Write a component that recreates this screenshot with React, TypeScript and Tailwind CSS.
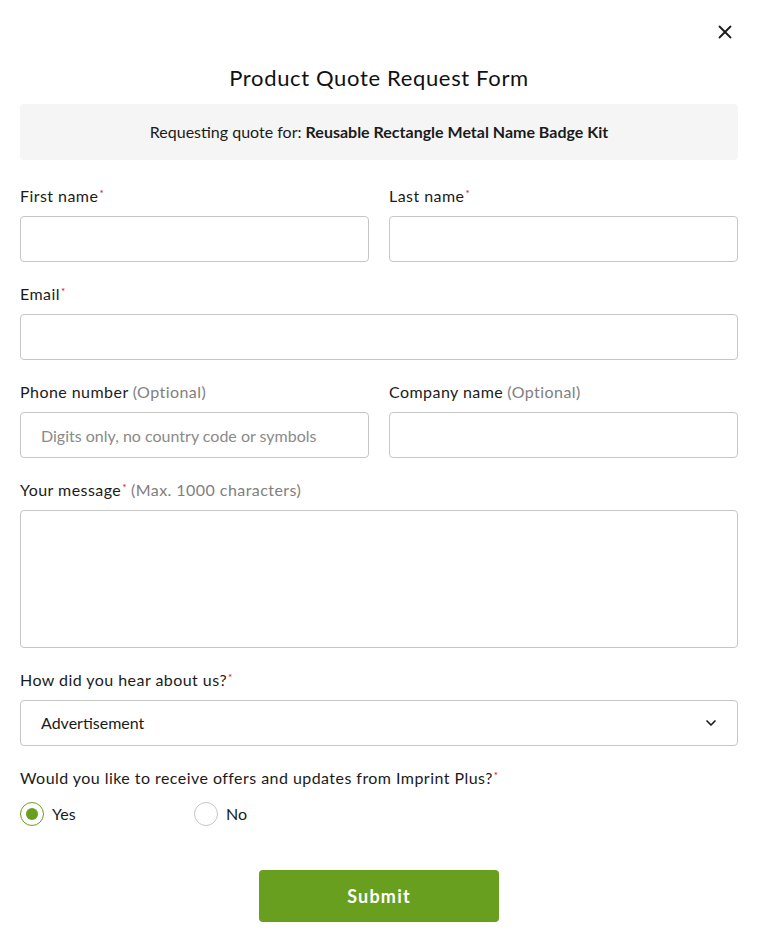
import { ChevronDown, X } from "lucide-react";

const font = { fontFamily: "Lato, 'Open Sans', sans-serif" };

function Label({
  text,
  required,
  note,
}: {
  text: string;
  required?: boolean;
  note?: string;
}) {
  return (
    <label className="mb-[10px] block text-[16px] leading-[20px] tracking-[0.45px] text-[#1b1b1b]">
      {text}
      {required && (
        <sup className="ml-[1px] text-[10px] text-[#d0021b]">*</sup>
      )}
      {note && <span className="ml-1 text-[#808080]">{note}</span>}
    </label>
  );
}

const inputCls =
  "h-[46px] w-full rounded-[4px] border border-[#c6c6c6] bg-white px-[20px] text-[16px] outline-none placeholder:text-[#8a8a8a]";

export default function App() {
  return (
    <main
      className="min-h-screen bg-white px-[20px] pb-[20px] text-[#1b1b1b]"
      style={font}
    >
      <div className="flex justify-end pt-[21px] pr-[2px]">
        <X className="h-[22px] w-[22px]" strokeWidth={2} />
      </div>

      <h1 className="mt-[21px] text-center text-[22px] leading-[28px] tracking-[0.65px] text-[#111]">
        Product Quote Request Form
      </h1>

      <div className="mt-[12px] flex h-[56px] items-center justify-center rounded-[4px] bg-[#f5f5f5] text-[16px]">
        Requesting quote for:&nbsp;
        <span className="font-bold">Reusable Rectangle Metal Name Badge Kit</span>
      </div>

      <form className="mt-[26px] flex flex-col gap-[22px]">
        <div className="grid grid-cols-2 gap-[20px]">
          <div>
            <Label text="First name" required />
            <input className={inputCls} />
          </div>
          <div>
            <Label text="Last name" required />
            <input className={inputCls} />
          </div>
        </div>

        <div>
          <Label text="Email" required />
          <input className={inputCls} />
        </div>

        <div className="grid grid-cols-2 gap-[20px]">
          <div>
            <Label text="Phone number" note="(Optional)" />
            <input
              className={inputCls}
              placeholder="Digits only, no country code or symbols"
            />
          </div>
          <div>
            <Label text="Company name" note="(Optional)" />
            <input className={inputCls} />
          </div>
        </div>

        <div>
          <Label text="Your message" required note="(Max. 1000 characters)" />
          <textarea className="block h-[138px] w-full resize-none rounded-[4px] border border-[#c6c6c6] px-[20px] py-[12px] outline-none" />
        </div>

        <div>
          <Label text="How did you hear about us?" required />
          <div className="flex h-[46px] items-center justify-between rounded-[4px] border border-[#c6c6c6] pl-[20px] pr-[18px] text-[16px]">
            <span>Advertisement</span>
            <ChevronDown className="h-[16px] w-[16px]" strokeWidth={2.5} />
          </div>
        </div>

        <div>
          <Label
            text="Would you like to receive offers and updates from Imprint Plus?"
            required
          />
          <div className="mt-[14px] flex items-center text-[16px]">
            <div className="flex w-[174px] items-center gap-[8px]">
              <span className="flex h-[24px] w-[24px] items-center justify-center rounded-full border border-[#689f1e]">
                <span className="h-[12px] w-[12px] rounded-full bg-[#689f1e]" />
              </span>
              Yes
            </div>
            <div className="flex items-center gap-[8px]">
              <span className="h-[24px] w-[24px] rounded-full border border-[#c6c6c6]" />
              No
            </div>
          </div>
        </div>

        <div className="mt-[22px] flex justify-center">
          <button
            type="button"
            className="h-[52px] w-[240px] rounded-[4px] bg-[#689f1e] text-[18px] font-bold tracking-[1.2px] text-white"
          >
            Submit
          </button>
        </div>
      </form>
    </main>
  );
}
